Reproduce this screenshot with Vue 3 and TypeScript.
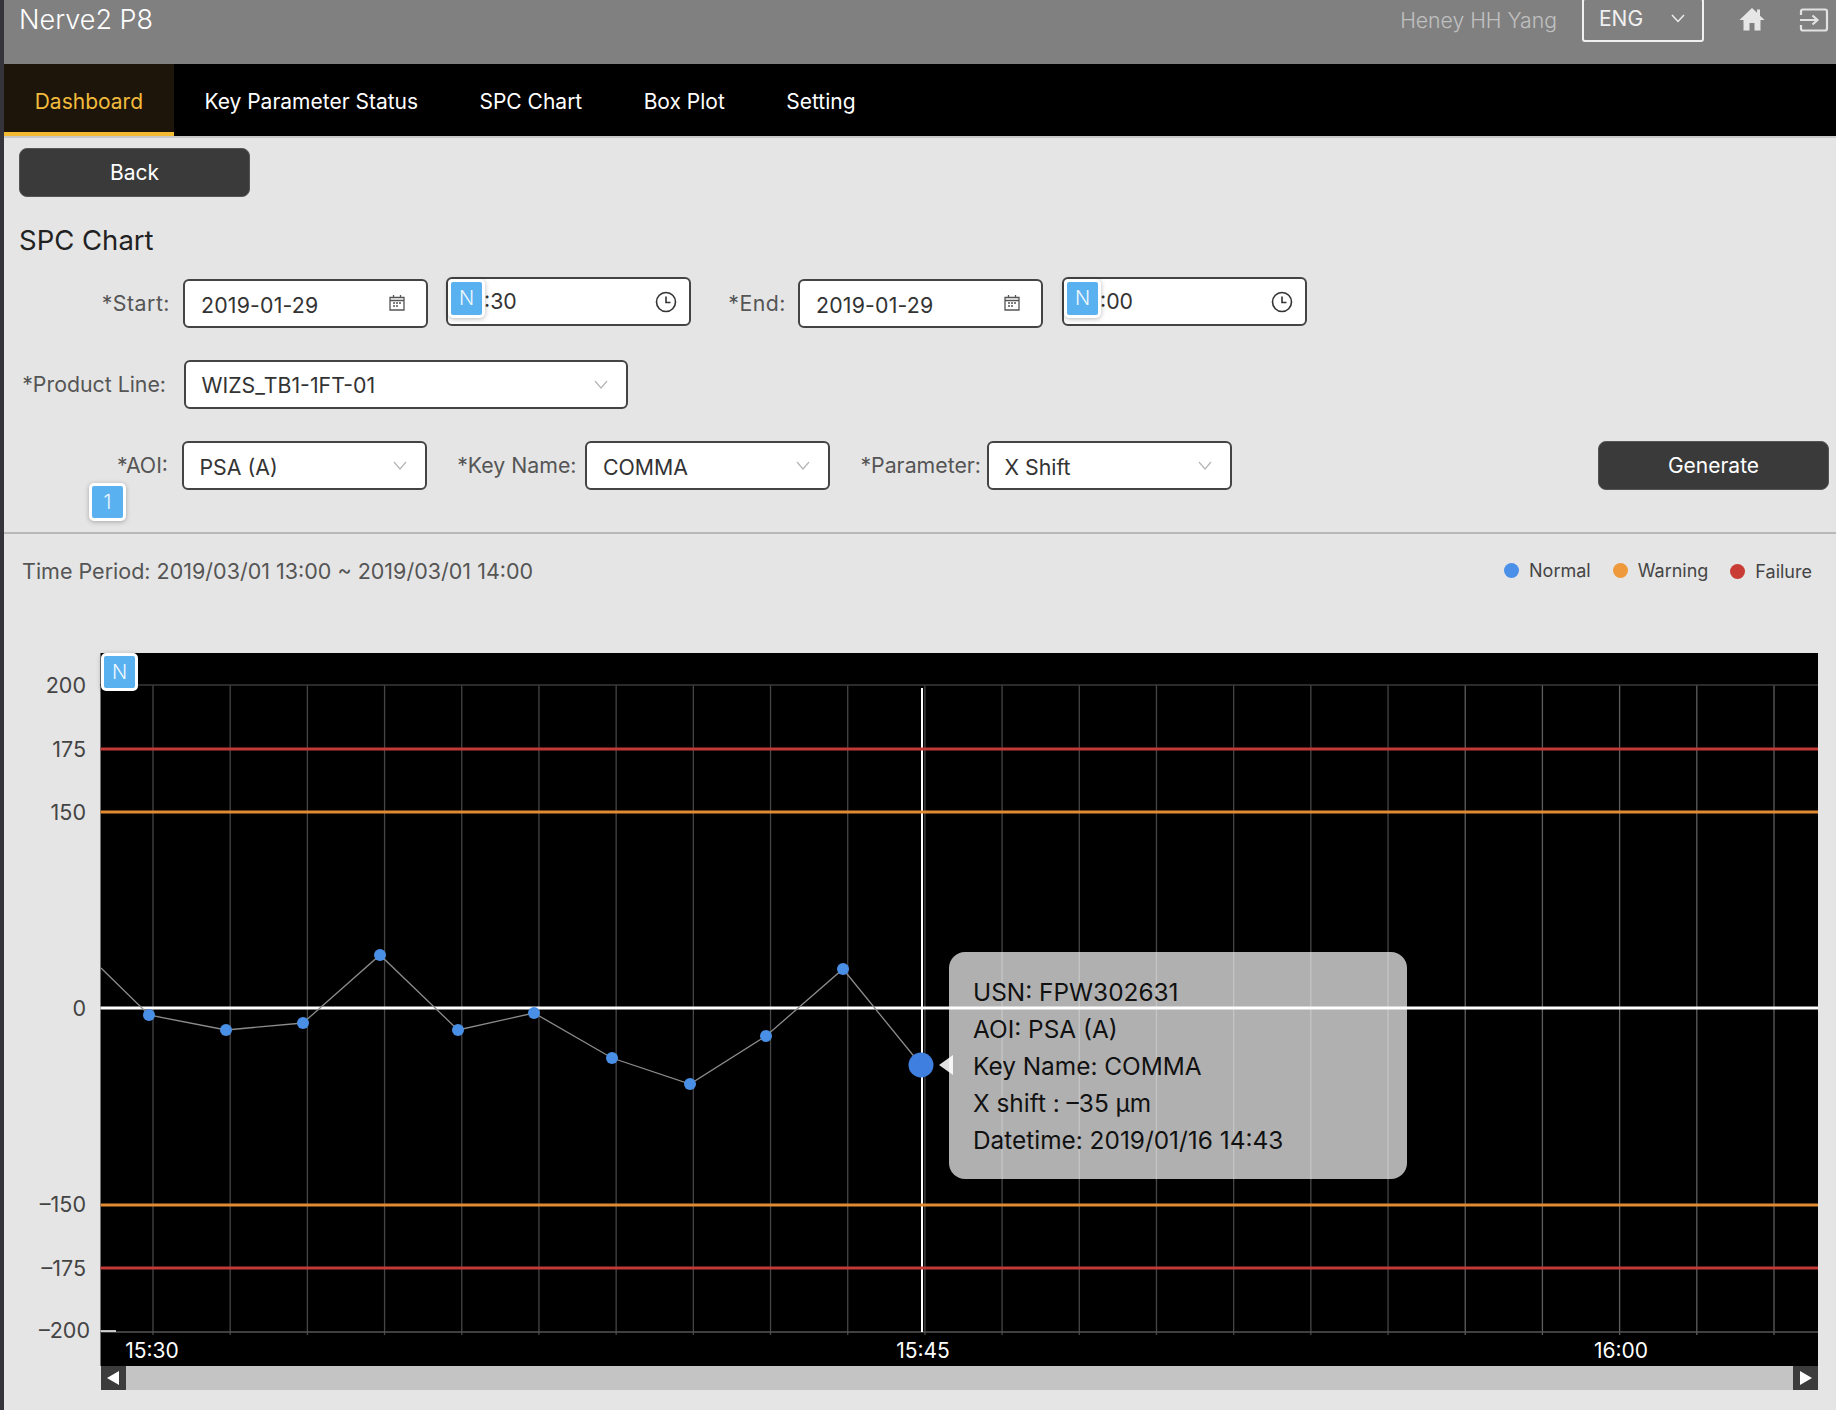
<script setup lang="ts">
const tabs = ['Dashboard', 'Key Parameter Status', 'SPC Chart', 'Box Plot', 'Setting']
const gridX = Array.from({ length: 22 }, (_, i) => 153 + i * 77.19)
const points: [number, number][] = [
  [101, 968], [149, 1015], [226, 1030], [303, 1023], [380, 955], [458, 1030],
  [534, 1013], [612, 1058], [690, 1084], [766, 1036], [843, 969], [921, 1065],
]
const polyline = points.map((p) => p.join(',')).join(' ')
const dots = points.slice(1, -1)
const yLabels = [
  { t: '200', y: 685 }, { t: '175', y: 749 }, { t: '150', y: 812 }, { t: '0', y: 1008 },
  { t: '–150', y: 1204 }, { t: '–175', y: 1268 }, { t: '–200', y: 1330 },
]
const limits = [
  { y: 749, c: '#c23a36' }, { y: 812, c: '#e08b33' }, { y: 1205, c: '#e08b33' }, { y: 1268, c: '#c23a36' },
]
const xLabels = [{ t: '15:30', x: 152 }, { t: '15:45', x: 923 }, { t: '16:00', x: 1621 }]
const tipLines = ['USN: FPW302631', 'AOI: PSA (A)', 'Key Name: COMMA', 'X shift : –35 µm', 'Datetime: 2019/01/16 14:43']
const legend = [
  { t: 'Normal', c: '#4a90e8' }, { t: 'Warning', c: '#ee9a3c' }, { t: 'Failure', c: '#c93c35' },
]
</script>

<template>
  <div class="page">
    <header class="topbar">
      <div class="brand">Nerve2 P8</div>
      <div class="user">Heney HH Yang</div>
      <div class="lang">
        <span>ENG</span>
        <svg width="14" height="9" viewBox="0 0 14 9"><path d="M1 1l6 6.5L13 1" fill="none" stroke="#eee" stroke-width="1.5" /></svg>
      </div>
      <svg class="home" width="26" height="24" viewBox="0 0 26 24"><path d="M13 1L0.5 13H4.5V23.5H10.5V16H15.5V23.5H21.5V13H25.5L21 8.700V2.500H18V5.800Z" fill="#e6e6e6" /></svg>
      <svg class="exit" width="30" height="24" viewBox="0 0 30 24"><path d="M2 7V3.500Q2 1.500 4 1.500H26Q28 1.500 28 3.500V20.500Q28 22.500 26 22.500H4Q2 22.500 2 20.500V17" fill="none" stroke="#e2e2e2" stroke-width="2.200" /><path d="M1 12H18M13.500 7.500L18.500 12L13.500 16.500" fill="none" stroke="#e2e2e2" stroke-width="2.200" /></svg>
    </header>

    <nav class="tabs">
      <div v-for="(tab, i) in tabs" :key="tab" class="tab" :class="{ active: i === 0 }">{{ tab }}</div>
    </nav>

    <section class="form">
      <button class="btn back">Back</button>
      <h1 class="title">SPC Chart</h1>

      <div class="row row1">
        <label class="lbl l-start">*Start:</label>
        <div class="field date">
          <span>2019-01-29</span>
          <svg width="16" height="17" viewBox="0 0 16 17"><path d="M1 3.500H15V16H1ZM1 6.500H15M4.500 1V4M11.500 1V4" fill="none" stroke="#555" stroke-width="1.300" /><path d="M4 9h2M7 9h2M10 9h2M4 12h2M7 12h2" stroke="#555" stroke-width="1.300" /></svg>
        </div>
        <div class="field time t-start">
          <span class="time-text">:30</span>
          <svg width="22" height="22" viewBox="0 0 22 22"><circle cx="11" cy="11" r="9.500" fill="none" stroke="#333" stroke-width="1.600" /><path d="M11 5.500V11.500H15.500" fill="none" stroke="#333" stroke-width="1.600" /></svg>
          <div class="badge b-time">N</div>
        </div>
        <label class="lbl l-end">*End:</label>
        <div class="field date">
          <span>2019-01-29</span>
          <svg width="16" height="17" viewBox="0 0 16 17"><path d="M1 3.500H15V16H1ZM1 6.500H15M4.500 1V4M11.500 1V4" fill="none" stroke="#555" stroke-width="1.300" /><path d="M4 9h2M7 9h2M10 9h2M4 12h2M7 12h2" stroke="#555" stroke-width="1.300" /></svg>
        </div>
        <div class="field time t-end">
          <span class="time-text">:00</span>
          <svg width="22" height="22" viewBox="0 0 22 22"><circle cx="11" cy="11" r="9.500" fill="none" stroke="#333" stroke-width="1.600" /><path d="M11 5.500V11.500H15.500" fill="none" stroke="#333" stroke-width="1.600" /></svg>
          <div class="badge b-time">N</div>
        </div>
      </div>

      <div class="row row2">
        <label class="lbl l-line">*Product Line:</label>
        <div class="field sel wide">
          <span>WIZS_TB1-1FT-01</span>
          <svg width="14" height="9" viewBox="0 0 14 9"><path d="M1 1l6 7 6-7" fill="none" stroke="#b5b5b5" stroke-width="1.200" /></svg>
        </div>
      </div>

      <div class="row row3">
        <label class="lbl l-aoi">*AOI:</label>
        <div class="field sel s-aoi">
          <span>PSA (A)</span>
          <svg width="14" height="9" viewBox="0 0 14 9"><path d="M1 1l6 7 6-7" fill="none" stroke="#b5b5b5" stroke-width="1.200" /></svg>
        </div>
        <label class="lbl l-key">*Key Name:</label>
        <div class="field sel">
          <span>COMMA</span>
          <svg width="14" height="9" viewBox="0 0 14 9"><path d="M1 1l6 7 6-7" fill="none" stroke="#b5b5b5" stroke-width="1.200" /></svg>
        </div>
        <label class="lbl l-par">*Parameter:</label>
        <div class="field sel">
          <span>X Shift</span>
          <svg width="14" height="9" viewBox="0 0 14 9"><path d="M1 1l6 7 6-7" fill="none" stroke="#b5b5b5" stroke-width="1.200" /></svg>
        </div>
        <button class="btn generate">Generate</button>
        <div class="badge b-one">1</div>
      </div>
    </section>

    <div class="divider"></div>

    <div class="period-row">
      <div class="period">Time Period: 2019/03/01 13:00 ~ 2019/03/01 14:00</div>
      <div class="legend">
        <div v-for="item in legend" :key="item.t" class="legend-item" :class="item.t.toLowerCase()">
          <i :style="{ background: item.c }"></i>{{ item.t }}
        </div>
      </div>
    </div>

    <div class="chart">
      <svg class="plot" width="1832" height="713" viewBox="4 653 1832 713">
        <rect x="100.500" y="653" width="1717.500" height="713" fill="#000" />
        <line v-for="x in gridX" :key="x" :x1="x" :x2="x" y1="685" y2="1335" :stroke="x > 1400 ? '#5e5e5e' : '#464646'" stroke-width="1.300" />
        <line x1="100" x2="1818" y1="685" y2="685" stroke="#3a3a3a" stroke-width="1.300" />
        <line x1="100" x2="1818" y1="1332" y2="1332" stroke="#555" stroke-width="1.300" />
        <line x1="100.500" x2="116" y1="1331" y2="1331" stroke="#fff" stroke-width="1.500" />
        <line x1="922" x2="922" y1="688" y2="1332" stroke="#fff" stroke-width="2" />
        <line v-for="l in limits" :key="l.y" x1="100.500" x2="1818" :y1="l.y" :y2="l.y" :stroke="l.c" stroke-width="3" />
        <line x1="100.500" x2="1818" y1="1008" y2="1008" stroke="#fff" stroke-width="3" />
        <polyline :points="polyline" fill="none" stroke="#8c8c8c" stroke-width="1.300" />
        <circle v-for="d in dots" :key="d[0]" :cx="d[0]" :cy="d[1]" r="6" fill="#4a8fe6" />
        <circle cx="921" cy="1065" r="12.500" fill="#3f7fdf" />
        <path d="M939 1065L953 1055V1075Z" fill="#e0e0e0" />
        <text v-for="l in yLabels" :key="l.t" :x="l.t === '–200' ? 90 : 86" :y="l.y + 8" text-anchor="end" class="axis-y">{{ l.t }}</text>
        <text v-for="l in xLabels" :key="l.t" :x="l.x" y="1358" text-anchor="middle" class="axis-x">{{ l.t }}</text>
      </svg>
      <div class="badge b-chart">N</div>
      <div class="tooltip">
        <div v-for="line in tipLines" :key="line">{{ line }}</div>
      </div>
      <div class="scrollbar">
        <div class="arrow"><svg width="14" height="14" viewBox="0 0 14 14"><path d="M13 0V14L1 7Z" fill="#fff" /></svg></div>
        <div class="track"></div>
        <div class="arrow"><svg width="14" height="14" viewBox="0 0 14 14"><path d="M1 0V14L13 7Z" fill="#fff" /></svg></div>
      </div>
    </div>
  </div>
</template>

<style>
html, body { margin: 0; background: #e5e5e5; }
</style>

<style scoped>
.page {
  box-sizing: border-box;
  width: 1836px;
  height: 1410px;
  overflow: hidden;
  border-left: 4px solid #34343a;
  background: #e5e5e5;
  font-family: Inter, "Liberation Sans", sans-serif;
  color: #444;
}
.topbar {
  box-sizing: border-box;
  height: 64px;
  background: #808080;
  display: flex;
  align-items: flex-start;
  position: relative;
  padding-left: 15px;
}
.brand { color: #fff; font-size: 27px; line-height: 40px; flex: 1; font-weight: 300; }
.user { color: #c0c0c0; font-size: 21.2px; line-height: 40px; font-weight: 300; }
.lang {
  box-sizing: border-box;
  width: 122px;
  height: 44px;
  margin: -2px 0 0 25px;
  border: 2px solid #f0f0f0;
  border-radius: 3px;
  display: flex;
  align-items: center;
  justify-content: space-between;
  padding: 0 17px 4px 15px;
  color: #f0f0f0;
  font-size: 21px;
}
.home { margin: 7px 0 0 35px; }
.exit { margin: 8px 7px 0 34px; }
.tabs {
  height: 72px;
  background: #000;
  border-bottom: 2px solid #c8c8c8;
  display: flex;
}
.tab {
  padding: 0 30.7px;
  color: #fff;
  font-size: 21px;
  line-height: 76px;
}
.tab.active {
  color: #f2bb3c;
  background: #1d150a;
  box-shadow: inset 0 -4px 0 #f2b933;
}
.form {
  box-sizing: border-box;
  height: 394px;
  padding: 10px 7px 0 15px;
  position: relative;
}
.btn {
  display: block;
  background: #3a3a3a;
  color: #fff;
  border: 1px solid #555;
  border-radius: 8px;
  font: 21px Inter, "Liberation Sans", sans-serif;
  height: 49px;
  padding: 0;
}
.back { width: 231px; }
.generate { width: 231px; margin-left: auto; }
.title {
  margin: 23px 0 17px;
  font-size: 27.5px;
  line-height: 40px;
  font-weight: 400;
  color: #222;
}
.row { display: flex; align-items: flex-start; position: relative; }
.row1 { height: 50px; }
.row2 { height: 49px; margin-top: 33px; }
.row3 { height: 49px; margin-top: 32px; }
.lbl {
  font-size: 21.3px;
  line-height: 49px;
  color: #555;
  text-align: right;
  box-sizing: border-box;
}
.l-start { width: 151px; margin: 2px 13px 0 0; letter-spacing: 0.5px; }
.l-end { width: 95px; margin: 2px 12px 0 0; letter-spacing: 0.5px; }
.l-line { width: 147px; margin-right: 17.5px; }
.l-aoi { width: 149px; margin-right: 13.5px; }
.l-key { width: 150px; margin-right: 8.5px; }
.l-par { width: 151px; margin-right: 5.5px; }
.field {
  box-sizing: border-box;
  width: 245px;
  height: 49px;
  background: #fff;
  border: 2px solid #444;
  border-radius: 6px;
  display: flex;
  align-items: center;
  justify-content: space-between;
  position: relative;
  font-size: 21.3px;
  color: #333;
  padding: 0 18px 0 16px;
}
.sel span { padding-top: 2px; }
.wide span { padding-top: 0; }
.date { margin-top: 2px; padding-right: 21px; }
.date span { padding-top: 2px; letter-spacing: 0.2px; }
.date svg { margin-top: -2px; }
.time { margin-left: 18px; padding-right: 12px; padding-left: 36px; }
.time-text { padding-bottom: 1px; }
.t-end { margin-left: 19px; }
.wide { width: 444px; }
.badge {
  position: absolute;
  box-sizing: border-box;
  width: 37px;
  height: 38px;
  background: #5ab1ef;
  border: 3px solid #fff;
  border-radius: 5px;
  color: #eef7ff;
  font-size: 20px;
  font-weight: 300;
  line-height: 32px;
  text-align: center;
  box-shadow: 0 1px 5px rgba(0, 0, 0, 0.28);
}
.b-time { left: 0; top: 0; height: 39px; }
.b-one { left: 70px; top: 42px; }
.b-chart { left: 97px; top: 0; height: 38px; }
.divider { height: 2px; background: #b8b8b8; }
.period-row {
  display: flex;
  justify-content: space-between;
  align-items: flex-start;
  height: 119px;
  padding: 17px 24px 0 18px;
  box-sizing: border-box;
}
.period { font-size: 21.5px; line-height: 40px; color: #555; }
.legend { display: flex; gap: 22px; font-size: 18px; color: #444; line-height: 35px; }
.legend-item { display: flex; align-items: center; }
.legend-item.failure { margin-top: 3px; }
.legend-item i { width: 15px; height: 15px; border-radius: 50%; margin-right: 10px; }
.chart { position: relative; height: 737px; }
.plot { display: block; }
.axis-y { fill: #444; font-size: 21.5px; font-family: Inter, "Liberation Sans", sans-serif; }
.axis-x { fill: #fff; font-size: 21px; font-family: Inter, "Liberation Sans", sans-serif; }
.tooltip {
  position: absolute;
  box-sizing: border-box;
  left: 945px;
  top: 299px;
  width: 458px;
  height: 227px;
  padding: 22px 24px;
  border-radius: 16px;
  background: rgba(255, 255, 255, 0.69);
  color: #111;
  font-size: 24.4px;
  line-height: 37px;
}
.scrollbar {
  display: flex;
  margin-left: 96.5px;
  width: 1717.5px;
  height: 24px;
}
.track { flex: 1; background: #c4c4c4; }
.arrow {
  width: 25px;
  background: #3c3c3c;
  display: flex;
  align-items: center;
  justify-content: center;
}
</style>
